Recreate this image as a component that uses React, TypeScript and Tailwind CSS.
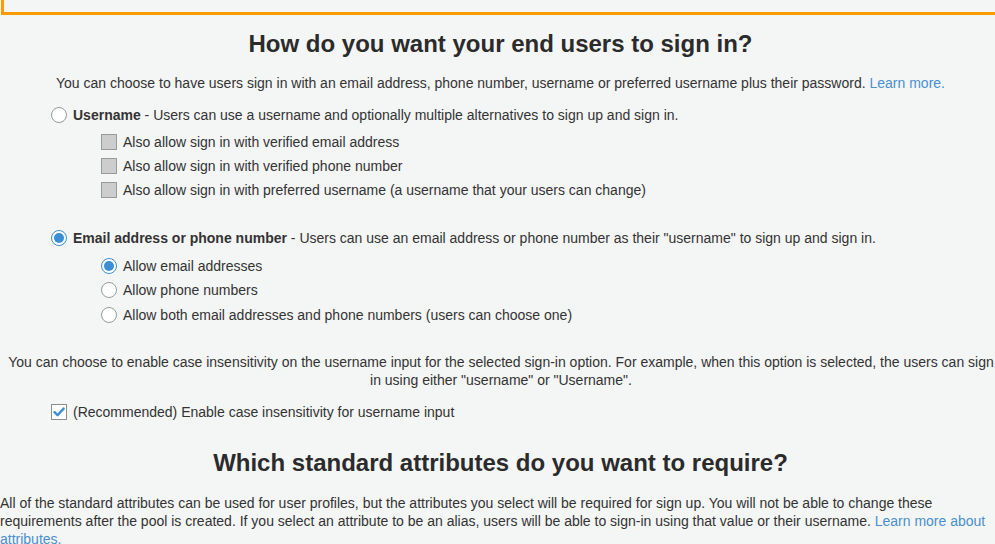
import React from 'react'

function Radio({ checked }: { checked?: boolean }) {
  return (
    <span
      className={`flex h-[16px] w-[16px] shrink-0 items-center justify-center rounded-full border bg-white ${
        checked ? 'border-[#3b8fd6]' : 'border-[#9a9a9a]'
      }`}
    >
      {checked && <span className="h-[10px] w-[10px] rounded-full bg-[#3b8fd6]" />}
    </span>
  )
}

function GrayBox() {
  return <span className="h-[16px] w-[16px] shrink-0 border border-[#9a9a9a] bg-[#cdcdcd]" />
}

function CheckedBox() {
  return (
    <span className="flex h-[16px] w-[16px] shrink-0 items-center justify-center border border-[#8f8f8f] bg-white">
      <svg width="12" height="10" viewBox="0 0 12 10">
        <path d="M1.5 5.2 L4.6 8.2 L10.6 1.6" fill="none" stroke="#3b8fd6" strokeWidth="2.4" strokeLinecap="round" strokeLinejoin="round" />
      </svg>
    </span>
  )
}

export default function App() {
  return (
    <div className="min-h-screen overflow-hidden bg-[#f4f5f5] font-['Liberation_Sans',Arial,sans-serif] text-[14px] leading-[18px] text-[#333]">
      {/* tail of the panel above */}
      <div className="ml-[1px] h-[15px] w-[1010px] border-b-[3px] border-l-[3px] border-[#ff9900]" />

      <h2 className="mt-[15px] pl-[6px] text-center text-[24px] font-bold leading-[28px] text-[#2b2b2b]">
        How do you want your end users to sign in?
      </h2>

      <p className="mt-[16px] pl-[6px] text-center">
        You can choose to have users sign in with an email address, phone number, username or preferred username plus their password.{' '}
        <span className="text-[#4a90d0]">Learn more.</span>
      </p>

      <div className="mt-[14px] pl-[51px]">
        <div className="flex items-center gap-[6px]">
          <Radio />
          <span>
            <b className="font-bold">Username</b> - Users can use a username and optionally multiple alternatives to sign up and sign in.
          </span>
        </div>
        <div className="mt-[9px] flex flex-col gap-[6px] pl-[50px]">
          <div className="flex items-center gap-[6px]">
            <GrayBox />
            <span>Also allow sign in with verified email address</span>
          </div>
          <div className="flex items-center gap-[6px]">
            <GrayBox />
            <span>Also allow sign in with verified phone number</span>
          </div>
          <div className="flex items-center gap-[6px]">
            <GrayBox />
            <span>Also allow sign in with preferred username (a username that your users can change)</span>
          </div>
        </div>

        <div className="mt-[30px] flex items-center gap-[6px]">
          <Radio checked />
          <span>
            <b className="font-bold">Email address or phone number</b> - Users can use an email address or phone number as their "username" to sign up and sign in.
          </span>
        </div>
        <div className="mt-[10px] flex flex-col gap-[6px] pl-[50px]">
          <div className="flex items-center gap-[6px]">
            <Radio checked />
            <span>Allow email addresses</span>
          </div>
          <div className="flex items-center gap-[6px]">
            <Radio />
            <span>Allow phone numbers</span>
          </div>
          <div className="mt-[1px] flex items-center gap-[6px]">
            <Radio />
            <span>Allow both email addresses and phone numbers (users can choose one)</span>
          </div>
        </div>
      </div>

      <p className="mt-[29px] pl-[7px] text-center">
        You can choose to enable case insensitivity on the username input for the selected sign-in option. For example, when this option is selected, the users can sign in using either "username" or "Username".
      </p>

      <div className="mt-[14px] flex items-center gap-[6px] pl-[51px]">
        <CheckedBox />
        <span>(Recommended) Enable case insensitivity for username input</span>
      </div>

      <h2 className="mt-[28px] pl-[6px] text-center text-[24px] font-bold leading-[28px] text-[#2b2b2b]">
        Which standard attributes do you want to require?
      </h2>

      <p className="mt-[17px] pr-[6px]">
        All of the standard attributes can be used for user profiles, but the attributes you select will be required for sign up. You will not be able to change these requirements after the pool is created. If you select an attribute to be an alias, users will be able to sign-in using that value or their username.{' '}
        <span className="text-[#4a90d0]">Learn more about attributes.</span>
      </p>
    </div>
  )
}
